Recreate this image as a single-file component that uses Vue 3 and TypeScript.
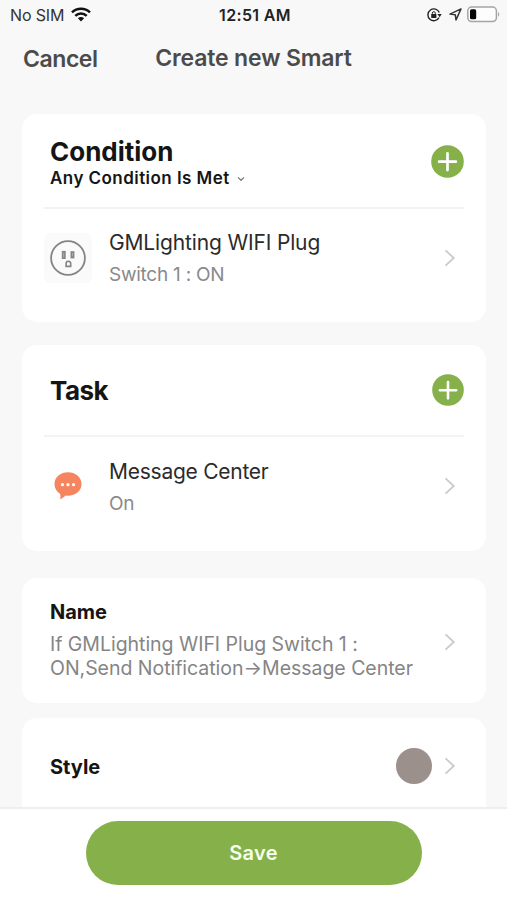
<script setup lang="ts">
interface Item {
  icon: 'plug' | 'message'
  title: string
  detail: string
}
interface Section {
  id: string
  title: string
  mode?: string
  item: Item
}

const sections: Section[] = [
  {
    id: 'condition',
    title: 'Condition',
    mode: 'Any Condition Is Met',
    item: { icon: 'plug', title: 'GMLighting WIFI Plug', detail: 'Switch 1 : ON' },
  },
  {
    id: 'task',
    title: 'Task',
    item: { icon: 'message', title: 'Message Center', detail: 'On' },
  },
]
const nameLines: string[] = ['If GMLighting WIFI Plug Switch 1 :', 'ON,Send Notification→Message Center']
</script>

<template>
  <div class="screen">
    <header class="status">
      <div class="carrier">
        <span>No SIM</span>
        <svg class="wifi" width="20" height="15" viewBox="0 0 20 15">
          <g fill="none" stroke="#111" stroke-width="2.5">
            <path d="M1 5.4C6 .5 14 .5 19 5.4" />
            <path d="M4.3 8.8c3.2-3.1 8.200-3.100 11.400 0" />
          </g>
          <path d="M6.900 11.300c1.800-1.600 4.400-1.600 6.200 0L10 14.400z" fill="#111" />
        </svg>
      </div>
      <span class="time">12:51 AM</span>
      <div class="indicators">
        <svg width="15" height="14" viewBox="0 0 15 14">
          <path d="M12.300 4.600A5.900 5.900 0 1 0 12 9.700" fill="none" stroke="#222" stroke-width="1.400" />
          <path d="M10.400 6h4.300l-2 3.200z" fill="#222" />
          <rect x="4.200" y="6.100" width="5.200" height="4" rx=".5" fill="#222" />
          <path d="M5.300 6.500V5.200a1.500 1.500 0 0 1 3 0v1.300" fill="none" stroke="#222" stroke-width="1" />
        </svg>
        <svg class="arrow" width="13" height="13" viewBox="0 0 13 13">
          <path d="M12 .9 1 6.100l5.300.7.700 5.200z" fill="none" stroke="#333" stroke-width="1.500" stroke-linejoin="round" />
        </svg>
        <svg class="battery" width="33" height="17" viewBox="0 0 33 17">
          <rect x=".8" y="1.100" width="28.600" height="14.400" rx="3.800" fill="#fdfdfd" stroke="#a5a5a5" stroke-width="1.500" />
          <rect x="3" y="3.300" width="6.200" height="10" rx="1.600" fill="#050505" />
          <path d="M31 6v4.800c1.700-.8 1.700-4 0-4.800z" fill="#aaa" />
        </svg>
      </div>
    </header>

    <nav class="nav">
      <span class="cancel">Cancel</span>
      <span class="heading">Create new Smart</span>
    </nav>

    <main class="content">
      <section v-for="s in sections" :key="s.id" class="card group" :class="s.id">
        <div class="head">
          <div class="labels">
            <h2>{{ s.title }}</h2>
            <div v-if="s.mode" class="mode">
              <span>{{ s.mode }}</span>
              <svg width="8" height="6" viewBox="0 0 8 6"><path d="m1 1.400 3 2.900 3-2.900" fill="none" stroke="#777" stroke-width="1.200" /></svg>
            </div>
          </div>
          <svg class="add" viewBox="0 0 33 33">
            <circle cx="16.500" cy="16.500" r="16.300" fill="#86b049" />
            <path d="M16.500 8.300v16.800M8.100 16.700h16.800" stroke="#fff" stroke-width="2.700" stroke-linecap="round" />
          </svg>
        </div>
        <div class="row">
          <div class="icon" :class="s.item.icon">
            <svg v-if="s.item.icon === 'plug'" width="36" height="36" viewBox="0 0 36 36" fill="none" stroke="#858585">
              <circle cx="18" cy="18" r="16.900" stroke-width="1.800" />
              <rect x="12.600" y="11.700" width="2.300" height="6.500" fill="#bbb" stroke-width="1.600" />
              <rect x="21.300" y="12" width="2.300" height="5.600" fill="#bbb" stroke-width="1.600" />
              <path d="M16.100 26.400v-2.900a2.300 2.300 0 0 1 4.600 0v2.900z" stroke-width="1.600" />
            </svg>
            <svg v-else width="28" height="28" viewBox="0 0 28 28">
              <path d="M14 .3C21.500.3 27.500 5.200 27.500 12S21.500 23.700 14 23.700c-.9 0-1.600 0-2.400-.2C10.300 24.500 8.200 26.400 6.300 27.600c.3-1.800.2-3.800-.1-5.600C2.600 19.700.5 16.200.5 12 .5 5.200 6.500.3 14 .3z" fill="#f5845f" />
              <g fill="#fff"><circle cx="8.500" cy="12.700" r="1.600" /><circle cx="14" cy="12.700" r="1.600" /><circle cx="19.500" cy="12.700" r="1.600" /></g>
            </svg>
          </div>
          <div class="text">
            <span class="title">{{ s.item.title }}</span>
            <span class="detail">{{ s.item.detail }}</span>
          </div>
          <svg class="chevron" width="12" height="18" viewBox="0 0 12 18"><path d="m1.500 1.300 8.300 7.700-8.300 7.700" /></svg>
        </div>
      </section>

      <section class="card name">
        <div class="name-text">
          <h3>Name</h3>
          <p><span v-for="line in nameLines" :key="line">{{ line }}</span></p>
        </div>
        <svg class="chevron" width="12" height="18" viewBox="0 0 12 18"><path d="m1.500 1.300 8.300 7.700-8.300 7.700" /></svg>
      </section>

      <section class="card style">
        <h3>Style</h3>
        <span class="swatch"></span>
        <svg class="chevron" width="12" height="18" viewBox="0 0 12 18"><path d="m1.500 1.300 8.300 7.700-8.300 7.700" /></svg>
      </section>
    </main>

    <footer class="footer">
      <button type="button" class="save">Save</button>
    </footer>
  </div>
</template>

<style>
body {
  margin: 0;
  background: #f8f8f8;
}
</style>

<style scoped>
.screen {
  width: 507px;
  height: 900px;
  display: flex;
  flex-direction: column;
  overflow: hidden;
  background: #f8f8f8;
  color: #151515;
  font-family: Inter, "Liberation Sans", sans-serif;
}
.screen * {
  box-sizing: border-box;
}
span, h2, h3 {
  white-space: nowrap;
}
svg {
  display: block;
  flex: none;
}
.status {
  flex: none;
  height: 30px;
  padding: 0 7px 0 10px;
  display: grid;
  grid-template-columns: 1fr auto 1fr;
  align-items: center;
  font-size: 16px;
  line-height: 30px;
}
.carrier {
  display: flex;
  align-items: center;
  gap: 7px;
  color: #333;
  letter-spacing: -0.15px;
}
.wifi {
  margin-top: -2px;
}
.time {
  font-weight: 600;
  color: #222;
  letter-spacing: 0.35px;
}
.indicators {
  display: flex;
  align-items: center;
  justify-content: flex-end;
  margin-top: -1px;
}
.arrow {
  margin: 0 5px 0 7px;
}
.nav {
  flex: none;
  height: 84px;
  padding: 14px 23px 0;
  display: grid;
  grid-template-columns: 1fr auto 1fr;
  align-items: start;
  font-size: 23px;
  line-height: 28px;
  font-weight: 600;
  color: #4b4b4b;
  letter-spacing: -0.15px;
}
.cancel {
  padding-top: 1px;
  letter-spacing: -0.45px;
}
.content {
  flex: 1;
  min-height: 0;
  overflow: hidden;
  padding: 0 21px 0 22px;
}
.card {
  background: #fff;
  border-radius: 15px;
}
.group {
  padding: 0 22px;
}
.condition {
  height: 208px;
  margin-bottom: 23px;
}
.task {
  height: 206px;
  margin-bottom: 27px;
}
.head {
  height: 95px;
  padding-left: 6px;
  display: flex;
  align-items: center;
  justify-content: space-between;
  border-bottom: 2px solid #f3f3f3;
}
.task .head {
  height: 92px;
}
h2, h3, p {
  margin: 0;
}
h2 {
  font-size: 26px;
  line-height: 30px;
  font-weight: 700;
}
.labels {
  padding-top: 6px;
}
.task .labels {
  padding-top: 2px;
}
.task h2 {
  letter-spacing: -0.5px;
}
.mode {
  display: flex;
  align-items: center;
  gap: 7px;
  font-size: 17px;
  line-height: 23px;
  font-weight: 600;
  letter-spacing: 0.45px;
}
.add {
  width: 33px;
  height: 33px;
  margin-top: 2px;
}
.task .add {
  width: 32px;
  height: 32px;
  margin-top: 0;
}
.row {
  display: flex;
  align-items: center;
  padding-right: 8px;
  height: 97px;
}
.task .row {
  height: 98px;
}
.icon {
  width: 48px;
  height: 50px;
  display: grid;
  place-items: center;
  border-radius: 7px;
}
.plug {
  background: #fafafa;
}
.text {
  flex: 1;
  display: flex;
  flex-direction: column;
  padding: 2px 0 0 17px;
}
.task .text {
  padding-top: 3px;
}
.title {
  font-size: 21px;
  line-height: 32px;
  color: #2b2b2b;
  letter-spacing: -0.15px;
}
.task .title {
  letter-spacing: -0.25px;
}
.detail {
  font-size: 19px;
  line-height: 32px;
  color: #8a8a8a;
  letter-spacing: -0.25px;
}
.chevron path {
  fill: none;
  stroke: #cacaca;
  stroke-width: 1.8;
}
.name {
  height: 125px;
  margin-bottom: 15px;
  padding: 0 30px 0 28px;
  display: flex;
  align-items: center;
  justify-content: space-between;
}
.name-text {
  padding-bottom: 4px;
}
.name .chevron {
  margin-top: 2px;
}
h3 {
  font-size: 20px;
  line-height: 28px;
  font-weight: 700;
}
p {
  display: flex;
  flex-direction: column;
  padding-top: 6px;
  font-size: 19.500px;
  line-height: 24px;
  color: #858585;
  letter-spacing: -0.03px;
}
.style {
  height: 120px;
  padding: 30px 30px 0 28px;
  display: flex;
  align-items: flex-start;
}
.style h3 {
  flex: 1;
  padding-top: 5px;
}
.swatch {
  width: 36px;
  height: 36px;
  border-radius: 50%;
  background: #9c908c;
  margin-right: 12px;
}
.style .chevron {
  margin-top: 9px;
}
.footer {
  flex: none;
  height: 93px;
  border-top: 2px solid #eee;
  background: #fff;
  display: flex;
  justify-content: center;
  padding-top: 12px;
}
.save {
  width: 336px;
  height: 64px;
  border: 0;
  padding: 0;
  border-radius: 32px;
  background: #86b049;
  color: #f6ffe9;
  font: 600 20px/64px Inter, "Liberation Sans", sans-serif;
  letter-spacing: 0.3px;
}
</style>
